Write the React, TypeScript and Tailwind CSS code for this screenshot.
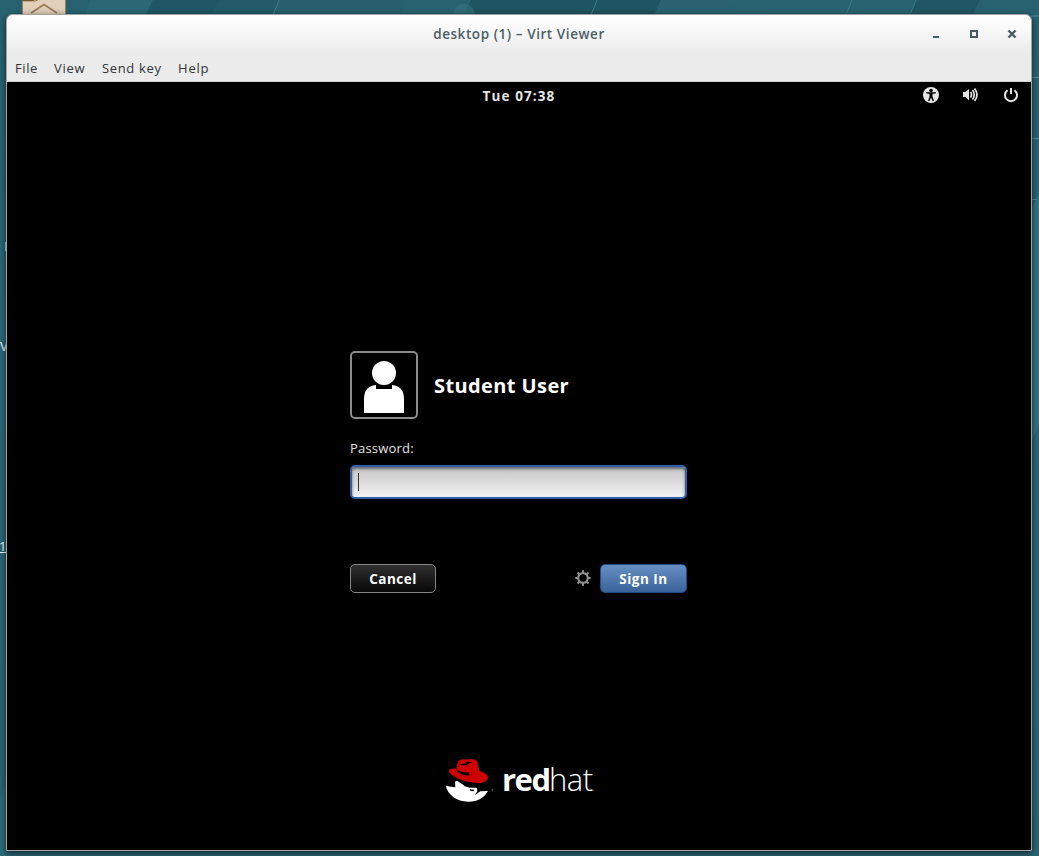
import type { ReactNode } from "react";

const menuItems = [
  { label: "File", style: "w-[23px] tracking-[0.6px]" },
  { label: "View", style: "w-8 tracking-[0.7px]" },
  { label: "Send key", style: "w-[60px] tracking-[0.65px]" },
  { label: "Help", style: "w-8 tracking-[0.8px]" },
];

const Wallpaper = () => (
  <svg className="absolute inset-0 h-full w-full" viewBox="0 0 1039 856">
    <defs>
      <linearGradient id="sea" x1="0" y1="0" x2="0" y2="1">
        <stop offset="0" stopColor="#286271" />
        <stop offset="0.4" stopColor="#2b6879" />
        <stop offset="1" stopColor="#2a6675" />
      </linearGradient>
    </defs>
    <rect width="1039" height="856" fill="url(#sea)" />
    <path d="M90 0h63l-8 16H84z" fill="#2b6876" />
    <path d="M153 0h67l-10 16h-65z" fill="#205766" />
    <path d="M220 0h59l-6 16h-63z" fill="#235b6a" />
    <path d="M279 0h126l-6 16H273z" fill="#285f6e" />
    <path d="M471 0h190l-7 16H463z" fill="#1f5563" />
    <path d="M661 0h70l-7 16h-70z" fill="#2a6272" />
    <path d="M916 0h64l-8 16h-63z" fill="#205664" />
    <path d="M279 0l-6 15M597 0l-6 15M852 0l-6 15M916 0l-6 15" stroke="#397d89" />
    <circle cx="464" cy="15" r="11" fill="#397280" opacity="0.6" />
    <path d="M1031 16h8M1031 77.500h8M1031 138.500h8M1031 199.500h8" stroke="#5795a3" />
    <path d="M1032 208l7-14v230l-7 16z" fill="#337384" />
    <path d="M0 800l6-18v74H0z" fill="#2c6c7b" />
  </svg>
);

const HomeFolder = () => (
  <svg className="absolute left-[22px] top-0" width="44" height="14" viewBox="0 0 44 14">
    <path d="M0 0h44v14H0z" fill="#e2cfba" />
    <path d="M0 1h13l3-1M.5 1v13M43.500 0v14" stroke="#9b8055" fill="none" />
    <path d="M0 0h13l-2 1H0z" fill="#78582d" />
    <path d="M9 13l13-8.500L35 13" stroke="#967953" strokeWidth="1.500" fill="none" />
  </svg>
);

const WindowButton = ({ children }: { children: ReactNode }) => (
  <button className="flex h-6 w-[38px] items-center justify-center">
    <svg width="10" height="10" viewBox="0 0 10 10" fill="none" stroke="#455a64">
      {children}
    </svg>
  </button>
);

const Header = () => (
  <header className="h-[67px] rounded-t-[5px] border-b border-[#cfcfcf] bg-[linear-gradient(#ffffff_0px,#f9f9f9_14px,#ebebeb_38px,#ebebeb_100%)]">
    <div className="flex h-[38px] items-center">
      <div className="w-[114px]" />
      <h1 className="flex-1 pt-px text-center text-[13.500px] font-semibold tracking-[0.57px] text-[#4c5e66]">
        desktop (1) – Virt Viewer
      </h1>
      <div className="flex w-[114px]">
        <WindowButton>
          <path d="M2 8h6" strokeWidth="2" />
        </WindowButton>
        <WindowButton>
          <path d="M2 2h6v6H2z" strokeWidth="2" />
        </WindowButton>
        <WindowButton>
          <path d="M1.500 1.500l7 7M8.500 1.500l-7 7" strokeWidth="2.400" />
        </WindowButton>
      </div>
    </div>
    <nav className="flex h-[28px] items-center gap-4 pl-2 pt-[3px] text-[13px] text-[#2e3436]">
      {menuItems.map((item) => (
        <span key={item.label} className={`${item.style} whitespace-nowrap`}>
          {item.label}
        </span>
      ))}
    </nav>
  </header>
);

const TopBar = () => (
  <div className="grid h-[27px] grid-cols-3 items-center text-[#e6e6e6]">
    <div />
    <div className="pt-px text-center text-[13.500px] font-bold tracking-[1.100px]">Tue 07:38</div>
    <div className="flex items-center justify-end gap-6 pb-px pr-3">
      <svg width="16" height="16" viewBox="0 0 16 16" fill="none">
        <circle cx="8" cy="8" r="8" fill="currentColor" />
        <circle cx="8" cy="3.600" r="1.800" fill="#000" />
        <path d="M3 6.200l3.500.8v2.500L5 14h1.500L8 10.500 9.500 14H11L9.500 9.500V7l3.500-.8V5.200H3z" fill="#000" />
      </svg>
      <svg width="16" height="16" viewBox="0 0 16 16" fill="none">
        <path d="M0 5h2.500L6 2v11.500L2.500 10H0z" fill="currentColor" />
        <path d="M7.500 5q2 2.700 0 5.400M9.500 3q3.500 4.700 0 9.400M11.500 1.500q5 6.200 0 12.400" stroke="currentColor" strokeWidth="1.700" />
      </svg>
      <svg width="16" height="16" viewBox="0 0 16 16" fill="none" stroke="currentColor" strokeWidth="2">
        <path d="M4.500 3.300a6 6 0 1 0 7 0M8 1v6" />
      </svg>
    </div>
  </div>
);

const Avatar = () => (
  <div className="h-[68px] w-[68px] rounded-[5px] border-2 border-[#8b8b8b]">
    <svg width="64" height="64" viewBox="0 0 64 64" fill="#fff">
      <circle cx="32" cy="20" r="12" />
      <path d="M12 60V46q0-13 12-14v4h16v-4q12 1 12 14v14z" />
    </svg>
  </div>
);

const Gear = () => (
  <svg width="16" height="16" viewBox="0 0 16 16" fill="none" stroke="#909090">
    <circle cx="8" cy="8" r="4.800" strokeWidth="2.200" />
    <path
      d="M8 3V.3M8 13v2.700M3 8H.3M13 8h2.700M4.500 4.500l-2-2M11.500 11.500l2 2M4.500 11.500l-2 2M11.500 4.500l2-2"
      strokeWidth="2"
    />
  </svg>
);

const Logo = () => (
  <div className="flex">
    <svg width="60" height="60" viewBox="0 0 180 180">
      <path d="M32 107q16 4 29 5l-1-17 6-3 15 10 9 6 36 6 1 10-8 12 17-12 23-1c-13 22-34 33-60 32-34-1-60-20-67-48z" fill="#fff" />
      <path d="M68 38c3-10 17-12 27-9 12-4 27-1 32 6l6 27c18 6 29 14 25 24-6 14-29 16-55 10-30-6-56-20-61-31-3-8 8-11 22-9z" fill="#cc0000" />
      <path d="M63 57c9 8 24 11 38 10l3 9c-20 2-38-7-41-19z" fill="#000" />
      <path d="M75 42c7 6 15 5 21 2l16-8-16 1 10-4-15 3 4 4zM88 100l13 4 26 2-3 6-20 1-16-5zM104 118l14 1-3 5-8-1z" fill="#000" />
      <circle cx="172" cy="119" r="3" fill="#555" />
    </svg>
    <div className="flex h-[60px] items-center pb-0.5 pl-[7px] font-['Open_Sans','Noto_Sans',sans-serif] text-[31px] leading-none text-white">
      <span className="w-[47px] font-bold tracking-[-1.500px]">red</span>
      <span className="w-[43px] font-light tracking-[-0.500px]">hat</span>
      <span className="pt-4 text-[9px] text-[#888]">.</span>
    </div>
  </div>
);

const LoginForm = () => (
  <main className="ml-[343px] mt-[242px] w-[337px] text-white">
    <div className="flex items-center gap-4">
      <Avatar />
      <h2 className="pt-0.5 text-xl font-bold tracking-[0.4px]">Student User</h2>
    </div>
    <label className="mt-[19px] block h-[27px] text-[13px] leading-[20px] tracking-[0.2px] text-[#e4e4e4]">Password:</label>
    <div className="flex h-[34px] items-center rounded-[5px] border-2 border-[#2d60a8] bg-linear-to-b from-[#c6c6c6] to-[#f2f2f2] pl-1.5 shadow-[inset_0_2px_3px_#666]">
      <span className="h-[18px] w-px bg-[#333]" />
    </div>
    <div className="mt-[65px] flex h-[29px] items-center text-[13.500px] font-bold tracking-[0.5px]">
      <button className="h-[29px] w-[86px] rounded-[5px] border border-[#858585] bg-linear-to-b from-[#303030] to-[#080808] pt-0.5">Cancel</button>
      <div className="ml-auto mr-[9px] pb-px">
        <Gear />
      </div>
      <button className="h-[29px] w-[87px] rounded-[5px] border border-[#244b80] bg-linear-to-b from-[#6690c3] to-[#3a639a] pt-0.5">Sign In</button>
    </div>
  </main>
);

const App = () => (
  <div className="relative h-[856px] w-[1039px] overflow-hidden pl-1.5 pt-3.5 font-['Open_Sans','Noto_Sans',sans-serif]">
    <Wallpaper />
    <HomeFolder />
    {/* Desktop icon labels peeking out from behind the window */}
    <span className="absolute left-[4px] top-[238px] text-[13px] leading-4 text-white">E</span>
    <span className="absolute left-0 top-[338px] text-[13px] leading-4 text-white">V</span>
    <span className="absolute left-[-1px] top-[538px] text-[13px] leading-4 text-white underline">1</span>
    <div className="relative h-[837px] w-[1026px] rounded-t-md border border-[#a2a2a2] bg-black shadow-[0_2px_7px_rgba(0,0,0,0.65)]">
      <Header />
      <TopBar />
      <LoginForm />
      <div className="ml-[428px] mt-[157px]">
        <Logo />
      </div>
    </div>
  </div>
);

export default App;
